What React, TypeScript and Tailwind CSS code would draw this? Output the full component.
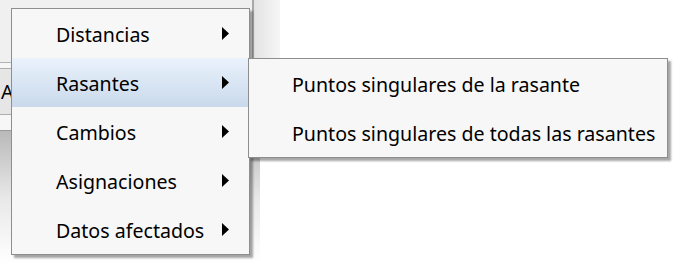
import React from "react";

const Arrow = () => (
  <svg width="7" height="13" viewBox="0 0 7 13" className="block">
    <path d="M0 0 L7 6.5 L0 13 Z" fill="#000" />
  </svg>
);

const mainItems = ["Distancias", "Rasantes", "Cambios", "Asignaciones", "Datos afectados"];
const subItems = ["Puntos singulares de la rasante", "Puntos singulares de todas las rasantes"];

export default function App() {
  return (
    <div
      className="relative w-[677px] h-[264px] overflow-hidden bg-white"
      style={{ fontFamily: '"Noto Sans", "Open Sans", sans-serif' }}
    >
      {/* background app content */}
      <div className="flex flex-col w-full h-full">
        <div className="flex h-[62px]">
          <div className="w-[252px] bg-[#f0f0f0]" />
          <div className="w-[2px] bg-[#a8a8a8]" />
          <div className="w-[26px] bg-gradient-to-r from-[#e3e3e3] to-[#f6f6f6]" />
          <div className="flex-1 bg-white" />
        </div>
        <div className="h-[1px] w-[260px] bg-[#b4b4b4]" />
        <div className="h-[5px] w-[260px] bg-[#f6f6f6]" />
        <div className="flex h-[47px] w-[260px] items-center border-y border-[#adadad] bg-[#e6e6e6] text-[19.6px] leading-none text-black">
          <span className="pl-[1px]">A</span>
        </div>
        <div className="h-[15px] w-[260px] bg-[#f7f7f7]" />
        <div className="h-[1px] w-[260px] bg-[#9a9a9a]" />
        <div className="flex-1 w-[260px] bg-gradient-to-b from-[#b9b9b9] via-[#e8e8e8] to-white" />
      </div>

      {/* main context menu */}
      <div className="absolute left-[11px] top-[8px] w-[239px] border border-[#8e8e8e] bg-[#f7f7f7] shadow-[3px_3px_2px_rgba(0,0,0,0.35)]">
        {mainItems.map((t, i) => (
          <div
            key={t}
            className={
              "flex h-[49px] items-center pl-[44px] pr-[20px] pt-[2px] text-[19.6px] text-black " +
              (i === 1 ? "bg-gradient-to-b from-[#eaf2fc] to-[#c9d9eb]" : "")
            }
          >
            <span className="flex-1 whitespace-nowrap">{t}</span>
            <span className="-mt-[2px]">
              <Arrow />
            </span>
          </div>
        ))}
      </div>

      {/* submenu */}
      <div className="absolute left-[248px] top-[58px] w-[420px] border border-[#8e8e8e] bg-[#f7f7f7] shadow-[3px_3px_2px_rgba(0,0,0,0.35)]">
        {subItems.map((t) => (
          <div key={t} className="flex h-[49px] items-center pl-[43px] pt-[2px] text-[19.6px] text-black whitespace-nowrap">
            {t}
          </div>
        ))}
      </div>
    </div>
  );
}
